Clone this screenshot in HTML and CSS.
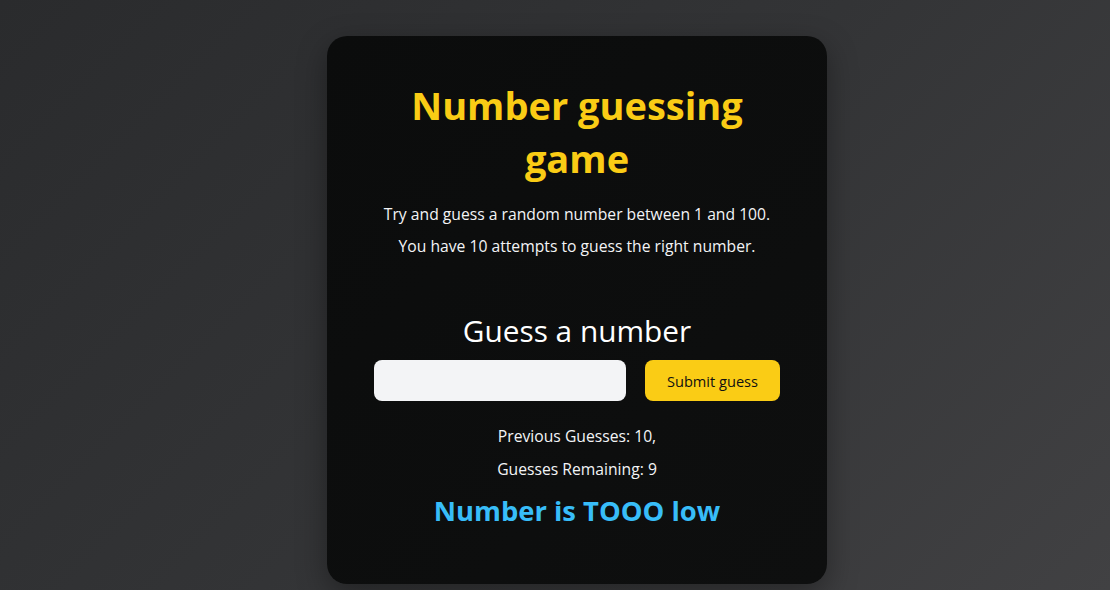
FILE: index.html
```html
<!DOCTYPE html>
<html lang="en">
<head>
<meta charset="utf-8">
<title>Number guessing game</title>
<link rel="stylesheet" href="styles.css">
</head>
<body>
<main class="card">
  <h1 class="title">Number guessing game</h1>
  <p class="intro">Try and guess a random number between 1 and 100.</p>
  <p class="intro">You have 10 attempts to guess the right number.</p>
  <h2 class="label">Guess a number</h2>
  <form class="form-row">
    <input class="guess-input" type="number" aria-label="Guess">
    <button class="submit-btn" type="button">Submit guess</button>
  </form>
  <p class="stat">Previous Guesses: 10,</p>
  <p class="stat">Guesses Remaining: 9</p>
  <p class="result">Number is TOOO low</p>
</main>
</body>
</html>
```
FILE: styles.css
```css
* { box-sizing: border-box; }
html, body { height: 100%; }
body {
  margin: 0;
  padding-left: 44px;
  font-family: "Open Sans", "Noto Sans", sans-serif;
  background: linear-gradient(135deg, #2a2b2d 0%, #333436 50%, #414143 100%);
  display: flex;
  justify-content: center;
  align-items: flex-start;
  overflow: hidden;
}
.card {
  margin-top: 36px;
  width: 500px;
  height: 548px;
  background: linear-gradient(135deg, #0b0c0c 0%, #0e0f0f 100%);
  border-radius: 20px;
  box-shadow: 0 10px 30px rgba(0, 0, 0, 0.35);
  padding: 43px 40px 0;
  text-align: center;
  color: #f3f4f6;
  display: flex;
  flex-direction: column;
  align-items: center;
}
.title {
  margin: 0 0 13px;
  color: #facc15;
  font-size: 38px;
  line-height: 53px;
  font-weight: 700;
  width: 350px;
}
.intro {
  margin: 0;
  font-size: 15.7px;
  line-height: 32px;
}
.label {
  margin: 49px 0 9px;
  font-size: 29.8px;
  line-height: 40px;
  font-weight: 400;
  color: #ffffff;
}
.form-row {
  display: flex;
  gap: 19px;
  margin: 0;
}
.guess-input {
  width: 252px;
  height: 41px;
  border: none;
  border-radius: 8px;
  background: #f3f4f6;
  outline: none;
  padding: 0 12px;
  font-size: 16px;
}
.submit-btn {
  width: 135px;
  height: 41px;
  border: none;
  border-radius: 8px;
  background: #facc15;
  color: #111111;
  font-family: inherit;
  font-size: 14.6px;
  cursor: pointer;
}
.stat {
  margin: 0;
  font-size: 15.7px;
  line-height: 33px;
}
.form-row + .stat { margin-top: 19px; }
.result {
  margin: 6px 0 0;
  color: #38bdf8;
  font-size: 27.4px;
  line-height: 37px;
  font-weight: 700;
}
```
